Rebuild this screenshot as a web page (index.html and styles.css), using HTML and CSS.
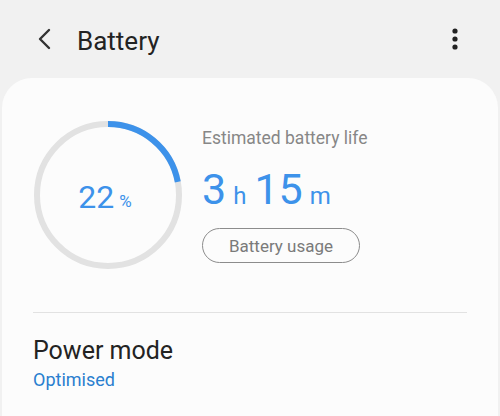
FILE: index.html
```html
<!DOCTYPE html>
<html lang="en">
<head>
  <meta charset="UTF-8" />
  <title>Battery</title>
  <meta name="viewport" content="width=device-width, initial-scale=1.0" />
  <link rel="stylesheet" href="styles.css">
</head>
<body>
  <!-- Top bar -->
  <header class="app-bar">
    <svg class="back-icon" width="16" height="24" viewBox="0 0 16 24">
      <path d="M13 3 L4 12 L13 21" fill="none" stroke="#333" stroke-width="2.4" stroke-linecap="round" stroke-linejoin="round"/>
    </svg>
    <h1 class="title">Battery</h1>
    <svg class="more-icon" width="8" height="24" viewBox="0 0 8 24">
      <circle cx="4" cy="4" r="2.6" fill="#222"/>
      <circle cx="4" cy="12" r="2.6" fill="#222"/>
      <circle cx="4" cy="20" r="2.6" fill="#222"/>
    </svg>
  </header>

  <main class="card">
    <section class="summary">
      <div class="gauge">
        <svg width="150" height="150" viewBox="0 0 150 150">
          <circle cx="75" cy="75" r="71" fill="none" stroke="#e2e2e2" stroke-width="6"/>
          <!-- 22% of circumference 446.1 = 98.1 -->
          <circle cx="75" cy="75" r="71" fill="none" stroke="#3d92ea" stroke-width="6"
                  stroke-dasharray="98.1 446.1" transform="rotate(-90 75 75)"/>
        </svg>
        <div class="gauge-value">22<span class="unit">%</span></div>
      </div>

      <div class="estimate">
        <p class="estimate-label">Estimated battery life</p>
        <p class="estimate-time">3<span class="unit">h</span>15<span class="unit">m</span></p>
        <button class="usage-btn">Battery usage</button>
      </div>
    </section>

    <hr class="divider">

    <div class="setting">
      <div class="setting-title">Power mode</div>
      <div class="setting-value">Optimised</div>
    </div>
  </main>
</body>
</html>
```

FILE: styles.css
```css
:root {
  --bg: #f1f1f1;
  --card: #fcfcfc;
  --blue: #3d92ea;
  --text: #232323;
  --muted: #878787;
}

body {
  margin: 0;
  background: var(--bg);
  font-family: Roboto, "Noto Sans", sans-serif;
  color: var(--text);
  width: 500px;
  height: 416px;
  overflow: hidden;
}

.app-bar {
  height: 78px;
  display: flex;
  align-items: center;
  padding: 0 41px 0 36px;
  box-sizing: border-box;
}

.back-icon {
  margin-top: 0;
}

.title {
  font-size: 26px;
  font-weight: 400;
  margin: 4px 0 0 25px;
  flex: 1;
}

.more-icon {
  margin-top: 0;
}

.card {
  margin: 0 2px;
  background: var(--card);
  border-radius: 30px 30px 0 0;
  height: 338px;
  padding: 42px 31px 0 31px;
  box-sizing: border-box;
}

.summary {
  display: flex;
  align-items: flex-start;
}

.gauge {
  width: 150px;
  height: 150px;
  position: relative;
  flex-shrink: 0;
}

.gauge svg {
  display: block;
}

.gauge-value {
  position: absolute;
  inset: 0;
  display: flex;
  align-items: center;
  justify-content: center;
  color: var(--blue);
  font-size: 32px;
  padding-right: 6px;
  padding-top: 4px;
}

.gauge-value .unit {
  font-size: 17px;
  margin-left: 5px;
  margin-top: 8px;
}

.estimate {
  margin-left: 19px;
  padding-top: 8px;
}

.estimate-label {
  margin: 0;
  font-size: 17.5px;
  color: var(--muted);
}

.estimate-time {
  margin: 17px 0 0 0;
  font-size: 43px;
  line-height: 48px;
  color: var(--blue);
}

.estimate-time .unit {
  font-size: 24px;
  margin: 0 8px 0 7px;
}

.usage-btn {
  margin-top: 8px;
  width: 158px;
  height: 35px;
  border: 1.5px solid #8c8c8c;
  border-radius: 18px;
  background: transparent;
  font-family: inherit;
  font-size: 17px;
  color: #7a7a7a;
}

.divider {
  border: none;
  border-top: 1px solid #e2e2e2;
  margin: 42px 0 0 0;
}

.setting {
  padding-top: 23px;
}

.setting-title {
  font-size: 25px;
  line-height: 30px;
}

.setting-value {
  font-size: 18px;
  color: #2a7fcf;
  margin-top: 3px;
}
```
